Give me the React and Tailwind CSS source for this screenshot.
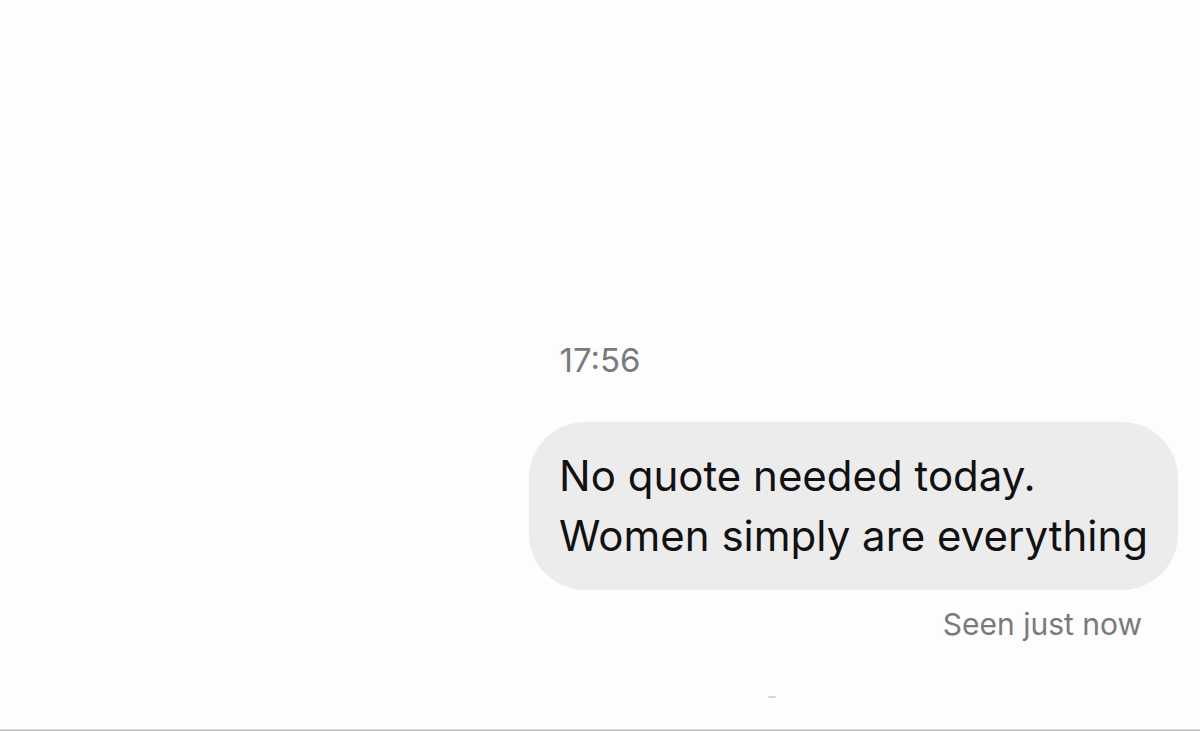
const messages = [
  { id: 1, lines: ['No quote needed today.', 'Women simply are everything'] },
];

const Timestamp = ({ children }) => (
  <time className="block text-center text-[33px] leading-10 text-[#7a7a7c]">{children}</time>
);

const Bubble = ({ lines }) => (
  <div className="rounded-[56px] bg-[#ececec] px-[30px] py-6 text-[42px] leading-[60px] text-[#111111]">
    {lines.map((line) => (
      <p key={line} className="whitespace-nowrap">{line}</p>
    ))}
  </div>
);

const App = () => (
  <main className="flex min-h-screen flex-col justify-end border-b border-[#b8b8b8] bg-[#fdfdfd] font-['Inter',sans-serif] shadow-[inset_0_-1px_0_#e0e0e0]">
    <Timestamp>17:56</Timestamp>

    <section className="mt-[42px] flex flex-col items-end pr-[22px]">
      {messages.map((message) => (
        <Bubble key={message.id} lines={message.lines} />
      ))}
      <p className="mt-[14px] pr-9 text-[30px] leading-10 text-[#7a7a7c]">Seen just now</p>
    </section>

    {/* Small dash under the thread */}
    <div className="mt-[52px] mb-8 ml-[64%] h-[2px] w-2 rounded-full bg-[#d4d4d4]" />
  </main>
);

export default App;
